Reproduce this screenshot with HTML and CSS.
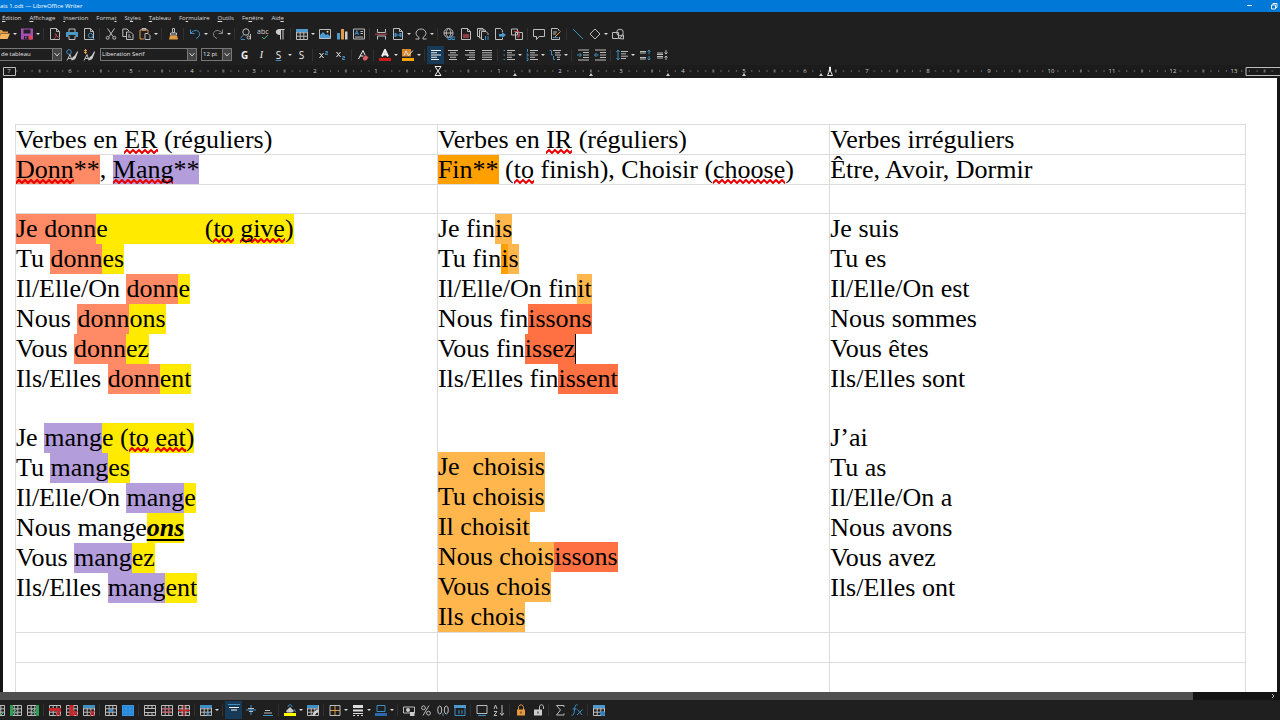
FILE: index.html
```
<!DOCTYPE html>
<html lang="fr">
<head>
<meta charset="utf-8">
<title>ais 1.odt — LibreOffice Writer</title>
<link rel="stylesheet" href="styles.css">
</head>
<body>
<svg class="defs" aria-hidden="true">
  <symbol id="grid" viewBox="0 0 12 12"><path class="g" d="M.5 1.500h11v10H.5zM.5 4.800h11M.5 8.200h11M4.200 1.500v10M7.800 1.500v10"/></symbol>
  <symbol id="page" viewBox="0 0 12 12"><path class="g" d="M1.500 .5h6l3 3v8h-9zM7.500 .5v3h3"/></symbol>
  <symbol id="lock" viewBox="0 0 12 12"><path d="M2 5.500h8v6H2z"/><path d="M5.500 7.500h1v2h-1z" fill="#222"/></symbol>
</svg>

<header class="titlebar">
  <span>ais 1.odt — LibreOffice Writer</span>
  <div class="winbtns">
    <button aria-label="Réduire"><svg viewBox="0 0 12 12"><path class="w" d="M3 5.500h5"/></svg></button>
    <button aria-label="Restaurer"><svg viewBox="0 0 12 12"><path class="w" d="M3.500 5h4v4h-4zM5 5V3.500h4v4H7.500"/></svg></button>
  </div>
</header>

<nav class="menubar">
  <button><u>É</u>dition</button><button><u>A</u>ffichage</button><button><u>I</u>nsertion</button><button>Forma<u>t</u></button><button>St<u>y</u>les</button><button><u>T</u>ableau</button><button>Fo<u>r</u>mulaire</button><button><u>O</u>utils</button><button>Fe<u>n</u>être</button><button>Aid<u>e</u></button>
</nav>

<div class="toolbar standard" role="toolbar" aria-label="Standard">
  <button class="i" aria-label="Ouvrir"><svg viewBox="0 0 12 12"><path class="of" d="M0 10V2h4l1 1.500h5V5H3l-2 5z"/><path fill="#f7b45c" d="M3 5.500h9L9.500 11H1z"/></svg></button><button class="a" aria-label="Options d’ouverture"></button>
  <button class="i" aria-label="Enregistrer"><svg viewBox="0 0 12 12"><path fill="#a44fb8" d="M0 .5h12v11H0z"/><path fill="#222" d="M2.500 1.500h7v4h-7zM3 8h5v3.500H3z"/><path fill="#a44fb8" d="M4 8.500h1.500v2H4z"/><circle cx="9.500" cy="9.500" r="2.300" fill="#e0455a"/></svg></button><button class="a" aria-label="Options d’enregistrement"></button>
  <i class="s"></i>
  <button class="i" aria-label="Exporter au format PDF"><svg viewBox="0 0 12 12"><use href="#page"/><path class="r" d="M5 11c2-2 3-4 2-5s-2 1 4 4"/></svg></button>
  <button class="i" aria-label="Imprimer"><svg viewBox="0 0 12 12"><path class="g" d="M3 4V1h6v3M3 8v3.500h6V8"/><path fill="#4b9bc9" d="M0 4h12v5H9.500V7h-7v2H0z"/></svg></button>
  <button class="i" aria-label="Aperçu"><svg viewBox="0 0 12 12"><use href="#page"/><circle class="b" cx="7.500" cy="7.500" r="2.200"/><path class="b" d="M9 9l2.500 2.500"/></svg></button>
  <i class="s"></i>
  <button class="i" aria-label="Couper"><svg viewBox="0 0 12 12"><path class="g" d="M2.500 .5l5.500 8M9.500 .5L4 8.500"/><circle class="g" cx="2.700" cy="9.800" r="1.500"/><circle class="g" cx="9.300" cy="9.800" r="1.500"/></svg></button>
  <button class="i" aria-label="Copier"><svg viewBox="0 0 12 12"><path class="g" d="M4 8.500H.8V1H5l2 2M4.500 4h4l2.500 2.500v5H4.500zM6 7h2M6 9h3"/></svg></button>
  <button class="i" aria-label="Coller"><svg viewBox="0 0 12 12"><path class="o" d="M5 11H1V2h8v3"/><path class="g" d="M3 2h4V.5H3zM6 5.500h3l2 2v4H6z"/></svg></button><button class="a" aria-label="Options de collage"></button>
  <i class="s"></i>
  <button class="i" aria-label="Cloner le formatage"><svg viewBox="0 0 12 12"><path class="g" d="M5.500 .5h2v4h-2zM3.500 5h6v2h-6z"/><path class="of" d="M3 7.500h7l1 4H2z"/></svg></button>
  <i class="s"></i>
  <button class="i" aria-label="Annuler"><svg viewBox="0 0 12 12"><path class="b" d="M1.500 1.500v4h4M1.500 5.500C5 1 10 2 10.500 5.500S8 10 7 10.500"/></svg></button><button class="a" aria-label="Historique d’annulation"></button>
  <button class="i" aria-label="Rétablir"><svg viewBox="0 0 12 12"><path class="d" d="M10.500 1.500v4h-4M10.500 5.500C7 1 2 2 1.500 5.500S4 10 5 10.500"/></svg></button><button class="a" aria-label="Historique de rétablissement"></button>
  <i class="s"></i>
  <button class="i" aria-label="Rechercher et remplacer"><svg viewBox="0 0 12 12"><circle class="g" cx="6" cy="4" r="3.200"/><path class="b" d="M3.700 6.500L.5 10.500M1 11.500h4"/><circle class="g" cx="8.500" cy="9.500" r="1.500"/><path class="g" d="M10.500 6v5.500"/></svg></button>
  <button class="i" aria-label="Orthographe"><svg viewBox="0 0 12 12"><text class="t" x="0" y="6" font-size="7">abc</text><path stroke="#41b07a" fill="none" d="M5 9l2 2 4-4"/></svg></button>
  <button class="i" aria-label="Marques de formatage"><svg viewBox="0 0 12 12"><path fill="#ccc" d="M5.500 1h5v1h-1v9.500h-1V2H7v9.500H6V7C.5 7 .5 1 5.500 1"/></svg></button>
  <i class="s"></i>
  <button class="i" aria-label="Insérer un tableau"><svg viewBox="0 0 12 12"><use href="#grid"/><path fill="#4b9bd0" d="M0 1h12v3H0z"/></svg></button><button class="a" aria-label="Taille du tableau"></button>
  <button class="i" aria-label="Image"><svg viewBox="0 0 12 12"><path class="g" d="M.5 1.500h11v9H.5z"/><path fill="#4b9bd0" d="M1 10V7l3-3 3 3 1.500-1L11 8v2z"/><circle cx="8.500" cy="3.800" r="1" fill="#f5d27a"/></svg></button>
  <button class="i" aria-label="Diagramme"><svg viewBox="0 0 12 12"><path fill="#4b9bd0" d="M1 5h3v6.500H1z"/><path class="of" d="M5 1h3v10.500H5z"/><path fill="#ccc" d="M9 3.500h2.500v8H9z"/></svg></button>
  <button class="i" aria-label="Zone de texte"><svg viewBox="0 0 12 12"><path class="g" d="M.5 1h11v10H.5zM7.500 3.500H10M7.500 5.500H10M2 9h8"/><path class="b" d="M2 7l1.800-4.500L5.600 7M2.600 5.500h2.400"/></svg></button>
  <i class="s"></i>
  <button class="i" aria-label="Saut de page"><svg viewBox="0 0 12 12"><path class="g" d="M2.500 1v3.500h8V1M2.500 11.500V8h8v3.500"/><path class="r" d="M0 6.200h12"/></svg></button>
  <button class="i" aria-label="Champ"><svg viewBox="0 0 12 12"><use href="#page"/><path fill="#3d8fc6" d="M2.500 5h2v1.500h3V5h2v4h-2V7.500h-3V9h-2z"/></svg></button><button class="a" aria-label="Types de champ"></button>
  <button class="i" aria-label="Caractère spécial"><svg viewBox="0 0 12 12"><path class="g" d="M.5 11h3.500V9.500C-1.500 6 1.500 1 6 1s7.500 5 2 8.500V11h3.500"/></svg></button><button class="a" aria-label="Caractères récents"></button>
  <i class="s"></i>
  <button class="i" aria-label="Hyperlien"><svg viewBox="0 0 12 12"><circle class="g" cx="5.500" cy="5" r="4.500"/><path class="g" d="M1 5h9M5.500 .5C2.500 3 2.500 7 5.500 9.500M5.500 .5c3 2.500 3 6.500 0 9"/><path class="b" d="M5 9h3v2.500H5zM9 9h3v2.500H9z"/></svg></button>
  <button class="i" aria-label="Note de bas de page"><svg viewBox="0 0 12 12"><use href="#page"/><path fill="#8e3b46" d="M3 6h6v4H3z"/></svg></button>
  <button class="i" aria-label="Note de fin"><svg viewBox="0 0 12 12"><path class="g" d="M2 8.500H.5v-8H6L7 2M4 10H2.500V2H8l1 1.500M4.500 3.500H9l2 2V7M4.500 3.500v8H7"/><path class="b" d="M8.500 8v4M11 8v4"/></svg></button>
  <button class="i" aria-label="Repère de texte"><svg viewBox="0 0 12 12"><path class="g" d="M8.500 4v-1.500l-2-2h-5v11h7V10"/><path fill="#4b9bd0" d="M5 6h3V4l4 3-4 3V8.500H5z"/></svg></button>
  <button class="i" aria-label="Renvoi"><svg viewBox="0 0 12 12"><path class="g" d="M.5 1h6v6h-6zM4.500 4.500h7v7h-7z"/><path class="r" d="M3 3.500h5v5M8 6v3H5.500"/></svg></button>
  <i class="s"></i>
  <button class="i" aria-label="Commentaire"><svg viewBox="0 0 12 12"><path class="g" d="M.5 1.500h11v7H6l-2.500 3v-3h-3z"/></svg></button>
  <button class="i" aria-label="Suivi des modifications"><svg viewBox="0 0 12 12"><path class="g" d="M9 3V2L7.500 .5h-6v11h8V9M3 4h4M3 6h3"/><path class="o" d="M5 9l5.500-5.500"/><path class="b" d="M3 9.500h5"/></svg></button>
  <i class="s"></i>
  <button class="i" aria-label="Ligne"><svg viewBox="0 0 12 12"><path class="b" d="M1 1l10 10"/></svg></button>
  <button class="i" aria-label="Formes de base"><svg viewBox="0 0 12 12"><path class="g" d="M6 1l5 5-5 5-5-5z"/></svg></button><button class="a" aria-label="Autres formes"></button>
  <button class="i" aria-label="Fonctions de dessin"><svg viewBox="0 0 12 12"><circle class="g" cx="8" cy="4.500" r="3.300"/><path class="g" d="M.5 4.500h6v6h-6zM7 10.500L11.500 7v4z"/></svg></button>
</div>

<div class="toolbar formatting" role="toolbar" aria-label="Formatage">
  <select class="style" aria-label="Style de paragraphe"><option>de tableau</option></select>
  <button class="i" aria-label="Actualiser le style"><svg viewBox="0 0 12 12"><circle class="b" cx="3" cy="3" r="2.300"/><path class="g" d="M1 11.500l3-6 2 6M2 9.500h4"/><path fill="#ccc" d="M6 11c0-4 2-3 3-5l2.500-4 .5 1-1.500 4C9.500 10 9 11 6 11"/></svg></button>
  <button class="i" aria-label="Nouveau style"><svg viewBox="0 0 12 12"><path class="o" d="M1 1l3 3M4 1L1 4M2.500 0v5"/><path class="g" d="M1 11.500l3-6 2 6M2 9.500h4"/><path fill="#ccc" d="M6 11c0-4 2-3 3-5l2.500-4 .5 1-1.500 4C9.500 10 9 11 6 11"/></svg></button>
  <select class="family" aria-label="Nom de police"><option>Liberation Serif</option></select>
  <select class="size" aria-label="Taille de police"><option>12 pt</option></select>
  <button class="i letter bold" aria-label="Gras">G</button>
  <button class="i letter ital" aria-label="Italique">I</button>
  <button class="i letter under" aria-label="Souligner">S</button><button class="a" aria-label="Styles de soulignage"></button>
  <button class="i letter" aria-label="Barrer">S</button>
  <i class="s"></i>
  <button class="i" aria-label="Exposant"><svg viewBox="0 0 12 12"><path class="w" d="M1.500 4l4 5M5.500 4l-4 5"/><path class="b" d="M7.500 2.500h2V4h-2v1.500h2.300"/></svg></button>
  <button class="i" aria-label="Indice"><svg viewBox="0 0 12 12"><path class="w" d="M1.500 3l4 5M5.500 3l-4 5"/><path class="b" d="M7.500 7.500h2V9h-2v1.500h2.300"/></svg></button>
  <i class="s"></i>
  <button class="i" aria-label="Effacer le formatage"><svg viewBox="0 0 12 12"><path class="w" d="M1.500 10L6 1.500 8 6M3 7h3.500"/><path fill="#e0606a" d="M5.500 9.500l3-3.500 3 2.500-2.500 3h-2z"/></svg></button>
  <i class="s"></i>
  <button class="i" aria-label="Couleur de police"><svg viewBox="0 0 12 12"><path class="w2" d="M3 7.500L6 1l3 6.500M4 5.500h4"/><path fill="#d01c1c" d="M0 9h12v3H0z"/></svg></button><button class="a" aria-label="Palette de police"></button>
  <button class="i" aria-label="Couleur de surlignage"><svg viewBox="0 0 12 12"><path fill="#d98b2b" d="M0 0h9v7.500H0z"/><path stroke="#ddd" fill="none" d="M2 6.500L4 2l2 4M6 7L11 1.500"/><path fill="#ffa600" d="M0 9h12v3H0z"/></svg></button><button class="a" aria-label="Palette de surlignage"></button>
  <i class="s"></i>
  <button class="i on" aria-label="Aligner à gauche" aria-pressed="true"><svg viewBox="0 0 12 12"><path class="w" d="M1 1.500h10M1 3.750h6M1 6h10M1 8.250h6M1 10.500h8"/></svg></button>
  <button class="i" aria-label="Centrer"><svg viewBox="0 0 12 12"><path class="g" d="M1 1.500h10M3 3.750h6M1 6h10M3 8.250h6M2 10.500h8"/></svg></button>
  <button class="i" aria-label="Aligner à droite"><svg viewBox="0 0 12 12"><path class="g" d="M1 1.500h10M5 3.750h6M1 6h10M5 8.250h6M3 10.500h8"/></svg></button>
  <button class="i" aria-label="Justifier"><svg viewBox="0 0 12 12"><path class="g" d="M1 1.500h10M1 3.750h10M1 6h10M1 8.250h10M1 10.500h10"/></svg></button>
  <i class="s"></i>
  <button class="i" aria-label="Puces"><svg viewBox="0 0 12 12"><path class="g" d="M4 1.500h8M4 3.750h5M4 6h8M4 8.250h5M4 10.500h8"/><path class="b" d="M.5 1.500H2M.5 6H2M.5 10.500H2"/></svg></button><button class="a" aria-label="Types de puces"></button>
  <button class="i" aria-label="Numérotation"><svg viewBox="0 0 12 12"><path class="g" d="M4 1.500h8M4 3.750h5M4 6h8M4 8.250h5M4 10.500h8"/><path class="b" d="M1.500 0v3M.5 5h1.500v2H.5M.5 9h1.500v2.500H.5"/></svg></button><button class="a" aria-label="Types de numérotation"></button>
  <button class="i" aria-label="Plan"><svg viewBox="0 0 12 12"><path class="g" d="M4 1.500h8M6 3.750h5M6 6h6M8 8.250h3M8 10.500h3"/><path class="b" d="M.5 1.500h2M2.500 2v4h1.500M4.500 7v3.500H6"/></svg></button><button class="a" aria-label="Formats de plan"></button>
  <i class="s"></i>
  <button class="i" aria-label="Augmenter le retrait"><svg viewBox="0 0 12 12"><path class="g" d="M1 1h11M6 3.500h6M6 6h6M6 8.500h6M1 11h11"/><path class="b" d="M0 6h4M2.500 4L4.500 6l-2 2"/></svg></button>
  <button class="i" aria-label="Diminuer le retrait"><svg viewBox="0 0 12 12"><path class="g" d="M1 1h11M6 3.500h6M6 6h6M6 8.500h6M1 11h11"/><path class="b" d="M4.500 6H.5M2.500 4l-2 2 2 2"/></svg></button>
  <i class="s"></i>
  <button class="i" aria-label="Interligne"><svg viewBox="0 0 12 12"><path class="g" d="M5 2.500h7M5 4.800h5M5 7.200h7M5 9.500h5"/><path class="b" d="M2 1v10M.5 3L2 1l1.500 2M.5 9L2 11l1.500-2"/></svg></button><button class="a" aria-label="Valeurs d’interligne"></button>
  <button class="i" aria-label="Augmenter l’espacement"><svg viewBox="0 0 12 12"><path class="g" d="M1 2.500h6M1 4h6M1 8.500h6M1 10h6"/><path class="b" d="M10 5V1M8.500 2.500L10 1l1.500 1.500M10 7v4M8.500 9.500L10 11l1.500-1.500"/></svg></button>
  <button class="i" aria-label="Diminuer l’espacement"><svg viewBox="0 0 12 12"><path class="g" d="M1 4h6M1 5.500h6M1 7.500h6M1 9h6M10 1v4M8.500 3.500L10 5l1.500-1.500M10 11V7M8.500 8.500L10 7l1.500 1.500"/></svg></button>
</div>

<svg class="ruler" aria-label="Règle">
  <defs>
    <pattern id="ticks" x="9" y="0" width="61.250" height="13" patternUnits="userSpaceOnUse">
      <path stroke="#aaa" d="M7.200 6h1M14.800 6h1M22.500 6h1M37.800 6h1M45.500 6h1M53.200 6h1"/><path stroke="#bbb" d="M30.600 4.500v3"/>
    </pattern>
  </defs>
  <rect x="16" y="0" width="1261" height="13" fill="url(#ticks)"/>
  <path class="g" d="M3.500 2.500h12v8h-12zM1290 2.500h-44v8h44"/>
  <g class="nums"><text x="9" y="8">7</text><text x="70" y="8">6</text><text x="131" y="8">5</text><text x="192" y="8">4</text><text x="254" y="8">3</text><text x="315" y="8">2</text><text x="376" y="8">1</text><text x="499" y="8">1</text><text x="560" y="8">2</text><text x="621" y="8">3</text><text x="683" y="8">4</text><text x="744" y="8">5</text><text x="805" y="8">6</text><text x="867" y="8">7</text><text x="928" y="8">8</text><text x="989" y="8">9</text><text x="1051" y="8">10</text><text x="1112" y="8">11</text><text x="1173" y="8">12</text><text x="1234" y="8">13</text></g>
  <path fill="#1b1b1b" stroke="#eee" d="M435 1.500h6l-3 4.500 3 4.500h-6l3-4.500zM827.500 10.500l2-4.500V2h1v4l2 4.500z"/>
  <path fill="#ccc" d="M513 11l2-3 2 3zM589 11l2-3 2 3zM666 11l2-3 2 3zM742 11l2-3 2 3zM819 11l2-3 2 3z"/>
</svg>

<main class="workspace">
  <div class="page">
    <table class="doc">
      <colgroup><col class="c1"><col class="c2"><col class="c3"></colgroup>
      <tr><td>Verbes en <em class="sp">ER</em> (réguliers)</td><td>Verbes en <em class="sp">IR</em> (réguliers)</td><td>Verbes irréguliers</td></tr>
      <tr><td><mark class="coral"><em class="sp">Donn</em>**</mark>, <mark class="violet"><em class="sp">Mang</em>**</mark></td><td><mark class="orange">Fin**</mark> (<em class="sp">to</em> finish), Choisir (<em class="sp">choose</em>)</td><td>Être, Avoir, Dormir</td></tr>
      <tr class="spacer"><td></td><td></td><td></td></tr>
      <tr>
        <td><p><mark class="coral">Je donn</mark><mark class="yellow">e<span class="tab"></span>(<em class="sp">to</em> <em class="sp">give</em>)</mark></p>
          <p>Tu <mark class="coral">donn</mark><mark class="yellow">es</mark></p>
          <p>Il/Elle/On <mark class="coral">donn</mark><mark class="yellow">e</mark></p>
          <p>Nous <mark class="coral">donn</mark><mark class="yellow">ons</mark></p>
          <p>Vous <mark class="coral">donn</mark><mark class="yellow">ez</mark></p>
          <p>Ils/Elles <mark class="coral">donn</mark><mark class="yellow">ent</mark></p>
          <p></p>
          <p>Je <mark class="violet">mang</mark><mark class="yellow">e (<em class="sp">to</em> <em class="sp">eat</em>)</mark></p>
          <p>Tu <mark class="violet">mang</mark><mark class="yellow">es</mark></p>
          <p>Il/Elle/On <mark class="violet">mang</mark><mark class="yellow">e</mark></p>
          <p>Nous mange<mark class="yellow strong">ons</mark></p>
          <p>Vous <mark class="violet">mang</mark><mark class="yellow">ez</mark></p>
          <p>Ils/Elles <mark class="violet">mang</mark><mark class="yellow">ent</mark></p></td>
        <td><p>Je fin<mark class="amber">is</mark></p>
          <p>Tu fin<mark class="orange">i</mark><mark class="amber">s</mark></p>
          <p>Il/Elle/On fin<mark class="amber">it</mark></p>
          <p>Nous fin<mark class="tomato">issons</mark></p>
          <p>Vous fin<mark class="tomato caret">issez</mark></p>
          <p>Ils/Elles fin<mark class="tomato">issent</mark></p>
          <p></p>
          <p></p>
          <p><mark class="amber">Je  choisis</mark></p>
          <p><mark class="amber">Tu choisis</mark></p>
          <p><mark class="amber">Il choisit</mark></p>
          <p><mark class="amber">Nous chois</mark><mark class="tomato">issons</mark></p>
          <p><mark class="amber">Vous chois</mark></p>
          <p><mark class="amber">Ils chois</mark></p></td>
        <td><p>Je suis</p><p>Tu es</p><p>Il/Elle/On est</p><p>Nous sommes</p><p>Vous êtes</p><p>Ils/Elles sont</p><p></p><p>J’ai</p><p>Tu as</p><p>Il/Elle/On a</p><p>Nous avons</p><p>Vous avez</p><p>Ils/Elles ont</p></td>
      </tr>
      <tr><td></td><td></td><td></td></tr>
      <tr><td></td><td></td><td></td></tr>
    </table>
  </div>
</main>

<div class="scroll"><div class="thumb"></div><svg viewBox="0 0 8 8"><path class="g" d="M3 2l2 2-2 2"/></svg></div>

<div class="toolbar tables" role="toolbar" aria-label="Tableau">
  <button class="i" aria-label="Insérer des lignes"><svg viewBox="0 0 12 12"><use href="#grid"/><path stroke="#41b07a" fill="none" d="M5 8l3 3 3-3"/></svg></button>
  <button class="i" aria-label="Colonne avant"><svg viewBox="0 0 12 12"><use href="#grid"/><path fill="#2f9e55" d="M0 1h3v11H0z"/><path stroke="#41b07a" fill="none" d="M7 5L4 8l3 2"/></svg></button>
  <button class="i" aria-label="Colonne après"><svg viewBox="0 0 12 12"><use href="#grid"/><path fill="#2f9e55" d="M9 1h3v11H9z"/><path stroke="#41b07a" fill="none" d="M5 5l3 3-3 2"/></svg></button>
  <i class="s"></i>
  <button class="i" aria-label="Supprimer des lignes"><svg viewBox="0 0 12 12"><use href="#grid"/><path fill="#c9252d" d="M0 4h12v3H0z"/><path class="r3" d="M7 7l4.500 4.500M11.500 7L7 11.500"/></svg></button>
  <button class="i" aria-label="Supprimer des colonnes"><svg viewBox="0 0 12 12"><use href="#grid"/><path fill="#c9252d" d="M3.500 1h4v11h-4z"/><path class="r3" d="M7 7l4.500 4.500M11.500 7L7 11.500"/></svg></button>
  <button class="i" aria-label="Supprimer le tableau"><svg viewBox="0 0 12 12"><use href="#grid"/><path fill="#3d8fc6" d="M0 1h12v3H0z"/><path class="r3" d="M7 7l4.500 4.500M11.500 7L7 11.500"/></svg></button>
  <i class="s"></i>
  <button class="i" aria-label="Sélectionner la cellule"><svg viewBox="0 0 12 12"><use href="#grid"/><path fill="#3d8fc6" d="M4 5h4v3H4z"/></svg></button>
  <button class="i" aria-label="Sélectionner le tableau"><svg viewBox="0 0 12 12"><path fill="#1f86dc" d="M0 1h12v11H0z"/><path stroke="#3f97e0" fill="none" d="M.5 1.500h11v10H.5zM.5 4.800h11M.5 8.200h11M4.200 1.500v10M7.800 1.500v10"/></svg></button>
  <i class="s"></i>
  <button class="i" aria-label="Fusionner les cellules"><svg viewBox="0 0 12 12"><path class="g" d="M.5 1.500h11v10H.5zM.5 4.500h11M.5 8.500h11M4 1.500v3M8 1.500v3M4 8.500v3M8 8.500v3"/></svg></button>
  <button class="i" aria-label="Scinder les cellules"><svg viewBox="0 0 12 12"><use href="#grid"/><path class="r" d="M1 4.800h10M1 8.200h10M4.200 5v3M7.800 5v3"/></svg></button>
  <button class="i" aria-label="Scinder le tableau"><svg viewBox="0 0 12 12"><use href="#grid"/><path class="r3" d="M0 6.500h12M6 1v11"/></svg></button>
  <i class="s"></i>
  <button class="i" aria-label="Optimiser la taille"><svg viewBox="0 0 12 12"><use href="#grid"/><path fill="#3d8fc6" d="M0 1h12v3H0z"/><path class="b" d="M7 11l4-4M7 8v3h3"/></svg></button><button class="a" aria-label="Options de taille"></button>
  <i class="s"></i>
  <button class="i on" aria-label="Aligner en haut" aria-pressed="true"><svg viewBox="0 0 12 12"><path class="b" d="M0 .5h12"/><path class="w" d="M1 3.500h10M3 6h6"/></svg></button>
  <button class="i" aria-label="Centrer verticalement"><svg viewBox="0 0 12 12"><path class="b" d="M1 6h10M6 1v10"/><path class="g" d="M3 4.500h6M4 7.500h4"/></svg></button>
  <button class="i" aria-label="Aligner en bas"><svg viewBox="0 0 12 12"><path class="b" d="M1 11.500h10"/><path class="g" d="M3 6.500h5M2 9h8"/></svg></button>
  <i class="s"></i>
  <button class="i" aria-label="Arrière-plan"><svg viewBox="0 0 12 12"><path fill="#ccc" d="M2 7l4-4 4 4-2 1.500H3z"/><path class="b" d="M4 3c0-3 4-3 4 0M10 5l1.500 3"/><path fill="#ff0" d="M0 9h12v3H0z"/></svg></button><button class="a" aria-label="Palette d’arrière-plan"></button>
  <button class="i" aria-label="Styles d’AutoFormat"><svg viewBox="0 0 12 12"><use href="#grid"/><path fill="#3d8fc6" d="M0 1h11v3H0z"/><path stroke="#ddd" stroke-width="2" d="M6 11l5-5"/></svg></button>
  <i class="s"></i>
  <button class="i" aria-label="Bordures"><svg viewBox="0 0 12 12"><path class="o" d="M6 2v9M1 6.500h10"/><path class="g" d="M1 1.500h10v10H1z"/></svg></button><button class="a" aria-label="Types de bordures"></button>
  <button class="i" aria-label="Style de bordure"><svg viewBox="0 0 12 12"><path fill="#ddd" d="M1 1h10v3H1zM1 5.500h10v2H1zM1 9h10v1H1zM1 11h2v1H1zM5 11h2v1H5zM9 11h2v1H9z"/></svg></button><button class="a" aria-label="Styles de trait"></button>
  <button class="i" aria-label="Couleur de bordure"><svg viewBox="0 0 12 12"><path class="b" d="M2 1.500h8v6H2z"/><path fill="#2d67ae" d="M0 9h12v3H0z"/></svg></button><button class="a" aria-label="Palette de bordure"></button>
  <i class="s"></i>
  <button class="i" aria-label="Format monétaire"><svg viewBox="0 0 12 12"><path class="g" d="M.5 3h11v6H.5z"/><circle cx="5" cy="6" r="2" fill="#ccc"/><path fill="#ccc" d="M7 8h4.500v4H7z"/></svg></button>
  <button class="i" aria-label="Format pourcentage"><svg viewBox="0 0 12 12"><circle class="g" cx="3.500" cy="3.800" r="1.900"/><circle class="g" cx="8.500" cy="9.200" r="1.900"/><path class="g" d="M9 1.500l-6 10"/></svg></button>
  <button class="i" aria-label="Format décimal"><svg viewBox="0 0 12 12"><ellipse class="g" cx="2.700" cy="6" rx="2" ry="4"/><ellipse class="g" cx="9.300" cy="6" rx="2" ry="4"/><path class="b" d="M6 9v3"/></svg></button>
  <button class="i" aria-label="Format date"><svg viewBox="0 0 12 12"><path class="b" d="M1 1.500h10v10H1z"/><path fill="#4b9bd0" d="M0 1h12v3H0z"/><path class="b" d="M5 6v4M8 6v4"/></svg></button>
  <i class="s"></i>
  <button class="i" aria-label="Insérer une légende"><svg viewBox="0 0 12 12"><path class="g" d="M1 1.500h10v8H1z"/><path class="b" d="M2 11.500h8"/></svg></button>
  <button class="i" aria-label="Trier"><svg viewBox="0 0 12 12"><path class="g" d="M1 5l1.500-4L4 5M1 7.500h3l-3 4h3M9 1v10M7 9l2 2.500L11 9"/></svg></button>
  <i class="s"></i>
  <button class="i" aria-label="Protéger les cellules"><svg viewBox="0 0 12 12"><path class="o" d="M3.500 6V3.500c0-3.500 5-3.500 5 0V6"/><use href="#lock" fill="#e9993c"/></svg></button>
  <button class="i" aria-label="Déprotéger les cellules"><svg viewBox="0 0 12 12"><path class="g" d="M7.500 6V3c0-3 4-3 4 0v2"/><use href="#lock" fill="#ccc"/></svg></button>
  <i class="s"></i>
  <button class="i" aria-label="Somme"><svg viewBox="0 0 12 12"><path class="g" d="M10 3V1.500H2.500L6.500 6l-4 5H10V9.500"/></svg></button>
  <button class="i" aria-label="Formule"><svg viewBox="0 0 12 12"><path class="b" d="M6.500 1C4 0 4 3 3.500 6S3 12 .5 11M1.500 5h4M6.500 5.500l4.500 5.500M11.500 5.500L6 11"/></svg></button>
  <i class="s"></i>
  <button class="i" aria-label="Propriétés du tableau"><svg viewBox="0 0 12 12"><use href="#grid"/><path fill="#4b9bd0" d="M0 1h12v3H0z"/><circle cx="9.500" cy="9.500" r="2.500" fill="#2d7fc0"/></svg></button>
</div>
</body>
</html>
```
FILE: styles.css
```
* { box-sizing: border-box; }
body {
  margin: 0;
  height: 100vh;
  display: flex;
  flex-direction: column;
  overflow: hidden;
  background: #1f1f1f;
  color: #ddd;
  font: 6px/12px "Open Sans", "Noto Sans", sans-serif;
}
button {
  margin: 0;
  padding: 0;
  border: 0;
  background: none;
  color: inherit;
  font: inherit;
}
.defs { position: absolute; width: 0; height: 0; }

.titlebar {
  flex: none;
  display: flex;
  justify-content: space-between;
  height: 12px;
  background: #0078d7;
  color: #fff;
}
.winbtns { display: flex; gap: 12px; }
.winbtns button { width: 12px; height: 12px; }
.winbtns svg { display: block; width: 12px; height: 12px; }

.menubar {
  flex: none;
  display: flex;
  gap: 8px;
  height: 12px;
  padding-left: 2px;
}

.toolbar {
  flex: none;
  display: flex;
  align-items: center;
  height: 20px;
}
.standard { margin-left: -5px; }
.formatting { height: 21px; }
.tables { margin-left: -10px; }

.i {
  flex: none;
  display: flex;
  align-items: center;
  justify-content: center;
  width: 17px;
  height: 18px;
}
.i svg { width: 12px; height: 12px; }
.i.on { background: #173a59; }
.a {
  flex: none;
  width: 6px;
  height: 18px;
  display: flex;
  align-items: center;
  justify-content: center;
}
.a::before {
  content: "";
  border: 2px solid transparent;
  border-top-color: #ddd;
  border-bottom: 0;
}
.s { flex: none; width: 1px; height: 12px; margin: 0 2px; background: #303030; }

.g, .b, .r, .r3, .o, .w, .w2, .d { fill: none; stroke-width: 1; }
.g { stroke: #bdbdbd; }
.d { stroke: #8a8a8a; }
.b { stroke: #3d8fc6; }
.r { stroke: #c24a57; }
.r3 { stroke: #c9252d; stroke-width: 1.500; }
.o { stroke: #e39a45; }
.of { fill: #e39a45; }
.w { stroke: #f2f2f2; }
.w2 { stroke: #f2f2f2; stroke-width: 2; }
.t { fill: #d5d5d5; }

.letter { font-size: 10px; color: #eee; }
.bold { font-weight: bold; }
.ital { font-family: "Liberation Serif", serif; font-style: italic; }
.under { text-decoration: underline #3d8fc6; }

select {
  appearance: none;
  flex: none;
  height: 13px;
  margin: 0;
  padding: 0 10px 0 1px;
  border: 1px solid #777;
  border-radius: 0;
  background: #1f1f1f url("data:image/svg+xml,%3Csvg xmlns='http://www.w3.org/2000/svg' width='9' height='11'%3E%3Cpath fill='%23444' stroke='%23777' d='M.5-1h10v14H.5z'/%3E%3Cpath fill='none' stroke='%23ccc' d='M2.500 4l2.500 3 2.500-3'/%3E%3C/svg%3E") no-repeat right center;
  color: #e6e6e6;
  font: inherit;
  line-height: 11px;
}
.style { width: 62px; margin-right: 1px; border-left: 0; }
.family { width: 97px; margin-left: 3px; }
.size { width: 31px; margin: 0 4px; }

.ruler {
  flex: none;
  display: block;
  width: 100%;
  height: 13px;
  background: #1b1b1b;
}
.nums { fill: #ccc; font-size: 6px; text-anchor: middle; }

.workspace {
  flex: 1;
  min-height: 0;
  display: flex;
  padding: 0 3px;
  background: #161616;
}
.page {
  flex: 1;
  overflow: hidden;
  padding: 46px 31px 0 12px;
  background: #fff;
}
.doc {
  width: 100%;
  table-layout: fixed;
  border-collapse: collapse;
  color: #000;
  font: 26px/30px "Liberation Serif", serif;
}
.c1 { width: 34.300%; }
.c2 { width: 31.900%; }
.doc td {
  height: 30px;
  padding: 0;
  border: 1px solid #dcdcdc;
  line-height: 29px;
  vertical-align: top;
  white-space: pre;
}
.doc .spacer td { height: 29px; }
.doc td:has(p) { line-height: 30px; white-space: normal; }
.doc p { height: 30px; margin: 0; white-space: pre; }
.doc p:empty { height: 29px; }
.doc mark { display: inline-block; color: inherit; }
.doc .coral { background: #ff8a65; }
.doc .violet { background: #b39ddb; }
.doc .yellow { background: #ffea00; }
.doc .orange { background: #ffa000; }
.doc .amber { background: #ffb74d; }
.doc .tomato { background: #ff7043; }
.doc .strong { font-weight: bold; font-style: italic; text-decoration: underline 2px; text-underline-offset: 3px; }
.doc .caret { box-shadow: 1px 0 #000; }
.tab { display: inline-block; width: 97px; }
.sp {
  font-style: normal;
  background: url("data:image/svg+xml,%3Csvg xmlns='http://www.w3.org/2000/svg' width='6' height='5'%3E%3Cpath fill='none' stroke='%23e80000' stroke-width='2' d='M-1.500 2.500L0 4l3-3 3 3 1.500-1.500'/%3E%3C/svg%3E") repeat-x left bottom;
}

.scroll {
  flex: none;
  display: flex;
  align-items: center;
  justify-content: space-between;
  height: 8px;
  background: #141414;
}
.thumb { width: 93.200%; height: 8px; background: #505050; }
.scroll svg { width: 8px; height: 8px; margin-right: 3px; }
```
